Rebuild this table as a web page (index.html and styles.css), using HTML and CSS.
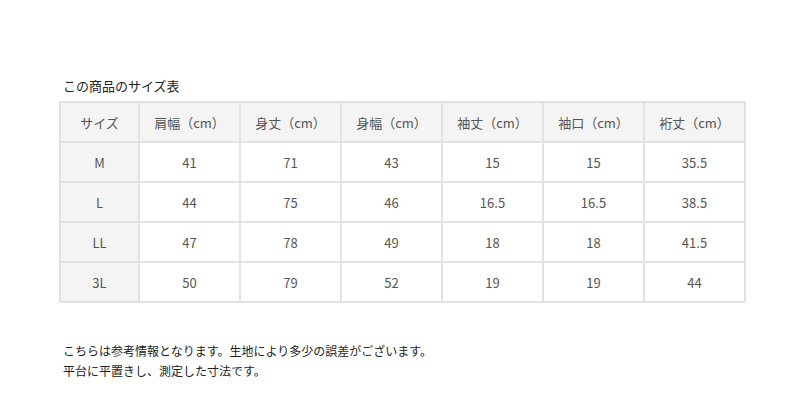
FILE: index.html
```html
<!DOCTYPE html>
<html lang="ja">
<head>
<meta charset="utf-8">
<link rel="stylesheet" href="styles.css">
</head>
<body>
<div class="wrap">
  <p class="title">この商品のサイズ表</p>
  <table class="size">
    <thead>
      <tr><th class="first">サイズ</th><th>肩幅（cm）</th><th>身丈（cm）</th><th>身幅（cm）</th><th>袖丈（cm）</th><th>袖口（cm）</th><th>裄丈（cm）</th></tr>
    </thead>
    <tbody>
      <tr><th>M</th><td>41</td><td>71</td><td>43</td><td>15</td><td>15</td><td>35.5</td></tr>
      <tr><th>L</th><td>44</td><td>75</td><td>46</td><td>16.5</td><td>16.5</td><td>38.5</td></tr>
      <tr><th>LL</th><td>47</td><td>78</td><td>49</td><td>18</td><td>18</td><td>41.5</td></tr>
      <tr><th>3L</th><td>50</td><td>79</td><td>52</td><td>19</td><td>19</td><td>44</td></tr>
    </tbody>
  </table>
  <p class="note">こちらは参考情報となります。生地により多少の誤差がございます。<br>平台に平置きし、測定した寸法です。</p>
</div>
</body>
</html>
```
FILE: styles.css
```css
html, body { margin: 0; padding: 0; background: #fff; }
body { font-family: "Noto Sans CJK JP", "Noto Sans", sans-serif; color: #333; }
.wrap { padding: 77px 0 0 59px; }
.title { margin: 0 0 6px 4px; font-size: 13px; line-height: 18px; color: #222; }
.size { border-collapse: collapse; font-size: 13px; color: #555; }
.size th, .size td { border: 2px solid #e2e2e2; height: 38px; padding: 0; text-align: center; font-weight: normal; width: 99px; }
.size th.first, .size tbody th { width: 77px; }
.size thead th, .size tbody th { background: #f4f4f4; }
.note { margin: 38px 0 0 4px; font-size: 12px; line-height: 20px; color: #222; }
```
